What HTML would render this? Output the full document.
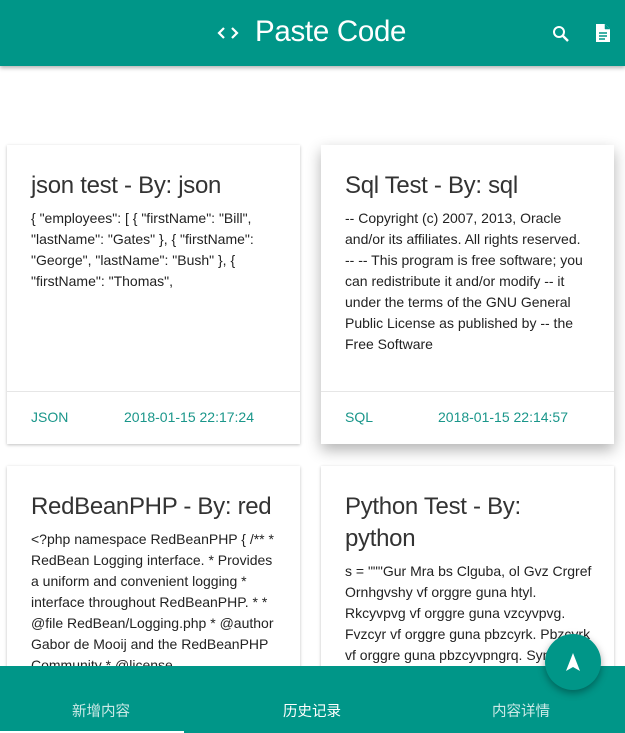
<!DOCTYPE html>
<html style="width:625px;height:733px;overflow:hidden"><head><meta charset="utf-8">
<style>
*{margin:0;padding:0;box-sizing:border-box}
body{width:625px;height:733px;overflow:hidden;background:#fff;font-family:"Liberation Sans","Noto Sans CJK SC",sans-serif;position:relative}
.top{position:absolute;left:0;top:0;width:625px;height:66px;background:#009688;box-shadow:0 2px 4px rgba(0,0,0,.3);z-index:5}
.title{position:absolute;left:255px;top:15px;color:#fff;font-size:29.5px;letter-spacing:-0.3px;font-weight:300}
.card{position:absolute;width:293px;height:299px;background:#fff;box-shadow:0 1px 3px rgba(0,0,0,.25);overflow:hidden}
.card.raise{box-shadow:0 6px 14px rgba(0,0,0,.3)}
.card h2{position:absolute;left:24px;top:25px;font-weight:300;font-size:24px;color:#333;white-space:nowrap;letter-spacing:-0.3px;line-height:32px}
.card .b{position:absolute;left:24px;font-size:14px;line-height:21px;color:#222;white-space:nowrap;letter-spacing:0}
.card .div{position:absolute;left:0;right:0;top:246px;border-top:1px solid #e6e6e6}
.card .f{position:absolute;top:264px;font-size:14px;color:#1a968a}
.bot{position:absolute;left:0;top:666px;width:625px;height:67px;background:#009688;z-index:5}
.tab{position:absolute;top:34px;font-size:14.5px;color:rgba(255,255,255,.8)}
.ind{position:absolute;left:0;top:65px;width:184px;height:2px;background:#fff}
.fab{position:absolute;left:545px;top:634px;width:56px;height:56px;border-radius:50%;background:#009688;box-shadow:0 3px 8px rgba(0,0,0,.35);z-index:6}
</style></head><body>
<div class="top">
<svg style="position:absolute;left:217px;top:25px" width="22" height="16" viewBox="0 0 22 16"><path d="M7 3 L2 8 L7 13 M15 3 L20 8 L15 13" stroke="#fff" stroke-width="2.2" fill="none"/></svg>
<div class="title">Paste Code</div>
<svg style="position:absolute;left:551px;top:24px" width="20" height="20" viewBox="0 0 20 20"><circle cx="8" cy="8" r="5" stroke="#fff" stroke-width="2" fill="none"/><path d="M11.5 11.5 L17 17" stroke="#fff" stroke-width="2.4"/></svg>
<svg style="position:absolute;left:595px;top:23px" width="16" height="20" viewBox="0 0 16 20"><path d="M1 1 H10 L15 6 V19 H1 Z" fill="#fff"/><path d="M10 1 V6 H15" fill="#009688" stroke="#009688" stroke-width="0.5"/><path d="M4 10 H12 M4 13 H12 M4 16 H10" stroke="#009688" stroke-width="1.6"/></svg>
</div>

<div class="card" style="left:7px;top:145px">
<h2>json test - By: json</h2>
<div class="b" style="top:63px">{ "employees": [ { "firstName": "Bill",<br>"lastName": "Gates" }, { "firstName":<br>"George", "lastName": "Bush" }, {<br>"firstName": "Thomas",</div>
<div class="div"></div>
<div class="f" style="left:24px">JSON</div><div class="f" style="left:117px">2018-01-15 22:17:24</div>
</div>

<div class="card raise" style="left:321px;top:145px">
<h2>Sql Test - By: sql</h2>
<div class="b" style="top:63px">-- Copyright (c) 2007, 2013, Oracle<br>and/or its affiliates. All rights reserved.<br>-- -- This program is free software; you<br>can redistribute it and/or modify -- it<br>under the terms of the GNU General<br>Public License as published by -- the<br>Free Software</div>
<div class="div"></div>
<div class="f" style="left:24px">SQL</div><div class="f" style="left:117px">2018-01-15 22:14:57</div>
</div>

<div class="card" style="left:7px;top:466px">
<h2>RedBeanPHP - By: red</h2>
<div class="b" style="top:63px">&lt;?php namespace RedBeanPHP { /** *<br>RedBean Logging interface. * Provides<br>a uniform and convenient logging *<br>interface throughout RedBeanPHP. * *<br>@file RedBean/Logging.php * @author<br>Gabor de Mooij and the RedBeanPHP<br>Community * @license</div>
</div>

<div class="card" style="left:321px;top:466px">
<h2>Python Test - By:<br>python</h2>
<div class="b" style="top:95px">s = """Gur Mra bs Clguba, ol Gvz Crgref<br>Ornhgvshy vf orggre guna htyl.<br>Rkcyvpvg vf orggre guna vzcyvpvg.<br>Fvzcyr vf orggre guna pbzcyrk. Pbzcyrk<br>vf orggre guna pbzcyvpngrq. Syng</div>
</div>

<div class="fab"><svg style="position:absolute;left:19px;top:18px" width="18" height="20" viewBox="0 0 18 20"><path d="M9 1 L16 19 L9 15 L2 19 Z" fill="#fff"/></svg></div>

<div class="bot">
<div class="tab" style="left:72px">新增内容</div>
<div class="tab" style="left:283px;color:#fff">历史记录</div>
<div class="tab" style="left:492px">内容详情</div>
<div class="ind"></div>
</div>
</body></html>
